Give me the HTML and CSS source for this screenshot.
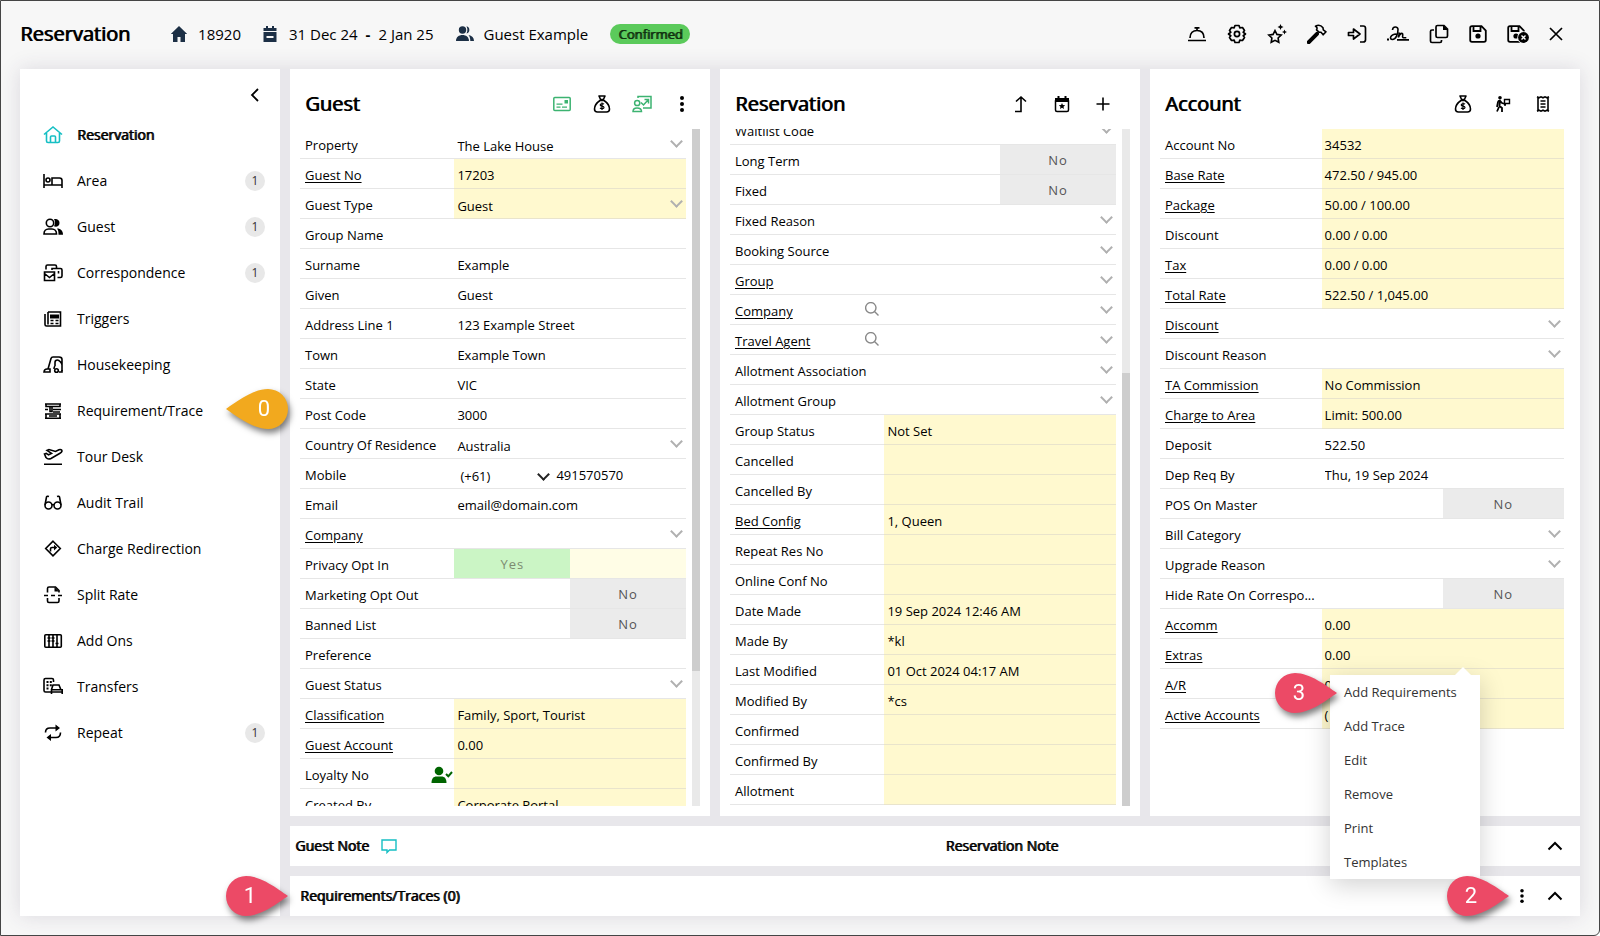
FILE: index.html
```
<!DOCTYPE html>
<html lang="en">
<head>
    <meta charset="UTF-8">
    <meta name="viewport" content="width=device-width, initial-scale=1.0">
    <title>Reservation 18920</title>
    <link rel="stylesheet" href="styles.css">
</head>
<body>

<!-- Shared icons -->
<svg class="sprite" aria-hidden="true">
    <symbol id="money-bag" viewBox="0 0 18 18">
        <path d="M6 1h6l-1.600 3.500h-2.800zM7 5.500C4 7.500 1.500 11 1.500 14c0 2 1 3 3 3h9c2 0 3-1 3-3 0-3-2.500-6.500-5.500-8.500z" fill="none" stroke="currentColor" stroke-width="1.600" stroke-linejoin="round"/>
        <path d="M11 9.200c-.6-.6-3.800-.9-3.800.7 0 1.700 3.800.8 3.800 2.500 0 1.600-3.200 1.400-4 .6M9 7.500v7.400" fill="none" stroke="currentColor" stroke-width="1.200"/>
    </symbol>
    <symbol id="kebab" viewBox="0 0 18 18">
        <circle cx="9" cy="3" r="2"/><circle cx="9" cy="9" r="2"/><circle cx="9" cy="15" r="2"/>
    </symbol>
    <symbol id="chevron-up" viewBox="0 0 18 18">
        <path d="M2.500 12.500L9 6l6.500 6.500" fill="none" stroke="currentColor" stroke-width="2"/>
    </symbol>
    <symbol id="search" viewBox="0 0 14 14">
        <path d="M9.500 9.500L13.500 13.500M11 5.800a5.200 5.200 0 1 1-10.400 0 5.200 5.200 0 0 1 10.400 0z" fill="none" stroke="currentColor" stroke-width="1.400"/>
    </symbol>
    <symbol id="save" viewBox="0 0 18 18">
        <path d="M3 1.200h9.500L16.800 5.500V15c0 1.200-.6 1.800-1.800 1.800H3c-1.200 0-1.800-.6-1.800-1.800V3c0-1.200.6-1.800 1.800-1.800zM4.500 1.500V6h7V1.500" fill="none" stroke="currentColor" stroke-width="1.800"/>
        <circle cx="9" cy="11" r="2.600"/>
    </symbol>
    <symbol id="pin-left" viewBox="0 0 62 40">
        <path d="M0 20C10 13 27 0 42 0a20 20 0 0 1 0 40C27 40 10 27 0 20z"/>
    </symbol>
    <symbol id="pin-right" viewBox="0 0 62 40">
        <path d="M62 20C52 13 35 0 20 0a20 20 0 0 0 0 40c15 0 32-13 42-20z"/>
    </symbol>
</svg>

<div class="app">
    <header class="topbar">
        <h1>Reservation</h1>
        <div class="summary">
            <span class="fact">
                <svg width="18" height="18" viewBox="0 0 18 18"><path d="M9 1L0.800 9H3v8h4.500v-5h3v5H15V9h2.200z"/></svg>
                18920
            </span>
            <span class="fact dates">
                <svg width="14" height="16" viewBox="0 0 14 16"><path d="M3 0h2v2h4V0h2v2h2.500v3H.5V2H3zM.5 6h13v10H.5zM3.500 10v2h7v-2z" fill-rule="evenodd"/></svg>
                31 Dec 24 <b>-</b> 2 Jan 25
            </span>
            <span class="fact">
                <svg width="18" height="18" viewBox="0 0 18 18"><circle cx="6.500" cy="5" r="3.700"/><path d="M0 16c0-4 3-6 6.500-6s6.500 2 6.500 6zM10.500 1.300a3.700 3.700 0 0 1 0 7.200c1.200-2 1.200-5.200 0-7.200zM12.500 10c3.500.5 5.500 2.500 5.500 6h-3.700c0-2.500-.4-4.500-1.800-6z"/></svg>
                Guest Example
            </span>
            <span class="status">Confirmed</span>
        </div>
        <div class="tools">
            <button aria-label="Check in"><svg width="20" height="20" viewBox="0 0 20 20"><path d="M1 16.500h18M3 14C3 9 6 6.500 10 6.500S17 9 17 14M10 6V4M7.500 3.800h5" fill="none" stroke="currentColor" stroke-width="1.700"/></svg></button>
            <button aria-label="Settings"><svg width="20" height="20" viewBox="0 0 20 20"><path d="M8 1.500h4l.8 2.300 2.700-.3 2 3-1.300 1.800L18.500 10l-2.300 1.700 1.300 1.800-2 3-2.700-.3-.8 2.300H8l-.8-2.300-2.700.3-2-3 1.300-1.800L1.500 10l2.300-1.700-1.300-1.800 2-3 2.700.3z" fill="none" stroke="currentColor" stroke-width="1.700" stroke-linejoin="round"/><circle cx="10" cy="10" r="2.600" fill="none" stroke="currentColor" stroke-width="1.700"/></svg></button>
            <button aria-label="Favourites"><svg width="20" height="20" viewBox="0 0 20 20"><path d="M8 6.500l1.900 3.900 4.300.6-3.100 3 .7 4.300L8 16.300l-3.800 2 .7-4.300-3.100-3 4.300-.6z" fill="none" stroke="currentColor" stroke-width="1.600"/><path d="M13.500 0l.9 2.100 2.100.9-2.100.9-.9 2.100-.9-2.100-2.100-.9 2.100-.9zM17.500 5.500l.8 1.700 1.700.8-1.700.8-.8 1.700-.8-1.700-1.700-.8 1.700-.8z"/></svg></button>
            <button aria-label="Maintenance"><svg width="20" height="20" viewBox="0 0 20 20"><path d="M1.800 18.200L10 9.800" stroke="currentColor" stroke-width="4" stroke-linecap="round"/><path d="M8.500 2.200C11 .8 14 1.200 16 3.800l.3 2 2.700 2-2.800 3-2.200-2.500-2-.2-2.500-2.300c1-1.600.6-2.600-1-3.600z" fill="none" stroke="currentColor" stroke-width="1.600" stroke-linejoin="round"/></svg></button>
            <button aria-label="Arrive"><svg width="20" height="20" viewBox="0 0 20 20"><path d="M13 2h3.200c1.500 0 2.300.8 2.300 2.300v11.400c0 1.500-.8 2.300-2.300 2.300H13M1.500 8.500h5V5l6.500 5-6.500 5v-3.500h-5z" fill="none" stroke="currentColor" stroke-width="1.700" stroke-linejoin="round"/></svg></button>
            <button aria-label="Signature"><svg width="22" height="20" viewBox="0 0 22 20"><path d="M5.500 6c.2-4 5.500-4 5.500-.5C11 10 9 15.500 5.500 15.500 2 15.500 3 10.500 9.500 10M12.500 8.500l-1.200 5c1-2.500 2.500-4.500 4-4 1.500.6-.8 4 1 4.200h3" fill="none" stroke="currentColor" stroke-width="1.600"/><path d="M0 14.500h2v2H0zM10 15h12v1.700H10z"/></svg></button>
            <button aria-label="Copy"><svg width="20" height="20" viewBox="0 0 20 20"><path d="M8.500 1.500H15l3.500 3.500v7c0 1-.5 1.500-1.500 1.500H8.500C7.500 13.500 7 13 7 12V3c0-1 .5-1.500 1.500-1.500zM5 6H3c-1 0-1.500.5-1.500 1.500V17c0 1 .5 1.500 1.500 1.500h8c1 0 1.500-.5 1.500-1.500v-1" fill="none" stroke="currentColor" stroke-width="1.700"/><path d="M14 1l5 5h-5z"/></svg></button>
            <button aria-label="Save"><svg width="18" height="18"><use href="#save"/></svg></button>
            <button aria-label="Save and close"><svg width="22" height="20" viewBox="0 0 22 20"><use href="#save" width="18" height="18" y="1"/><circle cx="16.500" cy="13.500" r="6.200" fill="#f7f7f7"/><circle cx="16.500" cy="13.500" r="5.400"/><path d="M14.500 11.500l4 4m0-4l-4 4" stroke="#fff" stroke-width="1.400"/></svg></button>
            <button aria-label="Close"><svg width="14" height="14" viewBox="0 0 14 14"><path d="M1 1l12 12M13 1L1 13" stroke="currentColor" stroke-width="1.700"/></svg></button>
        </div>
    </header>

    <div class="workspace">
        <nav class="sidebar">
            <button class="collapse" aria-label="Collapse menu"><svg width="10" height="16" viewBox="0 0 10 16"><path d="M8 2L2 8l6 6" fill="none" stroke="currentColor" stroke-width="1.800"/></svg></button>
            <a class="nav-item active" href="#">
                <svg width="20" height="20" viewBox="0 0 20 20"><path d="M1 9.500L10 2l9 7.500M3.500 8v8c0 1 .5 1.500 1.500 1.500h10c1 0 1.500-.5 1.500-1.500V8M7.500 17v-5c0-.7.300-1 1-1h3c.7 0 1 .3 1 1v5"/></svg>
                Reservation
            </a>
            <a class="nav-item" href="#">
                <svg width="20" height="20" viewBox="0 0 20 20"><path d="M1 3v14M1 14h18M19 17v-7.500c0-1.500-1-2.500-2.500-2.500H9v7"/><circle cx="5" cy="9" r="2"/></svg>
                Area <span class="count">1</span>
            </a>
            <a class="nav-item" href="#">
                <svg width="20" height="20" viewBox="0 0 20 20"><circle cx="7" cy="6" r="3.700"/><path d="M1 17c0-3 2-5 4.500-5H9c2.500 0 4.500 2 4.500 5z"/><path class="solid" d="M11 2.300c2-.6 5.500.2 5.500 3.700S13 10.300 11 9.200c1.300-2 1.300-5 0-6.900zM14 11.500c4 0 6 2.500 6 6.300h-4.500c0-2.600 0-4.300-1.500-6.300z"/></svg>
                Guest <span class="count">1</span>
            </a>
            <a class="nav-item" href="#">
                <svg width="20" height="20" viewBox="0 0 20 20"><path d="M3 6.500V3.500C3 2.500 3.500 2 4.500 2H12c1 0 1.500.5 1.500 1.500V5M9 7V5.500h8.500c1 0 1.500.5 1.500 1.500v6c0 1-.5 1.500-1.500 1.500h-3M1.500 9h10v8.500h-10zM1.500 10.500l5 4 5-4M15.500 8v2.500"/></svg>
                Correspondence <span class="count">1</span>
            </a>
            <a class="nav-item" href="#">
                <svg width="20" height="20" viewBox="0 0 20 20"><path d="M5 3h12.500v14H3.500c-1 0-1.500-.5-1.500-1.500V5M5 3v12.500M7.500 11.500h3M12.500 11.500h3M7.500 14.500h3M12.500 14.500h3"/><path class="solid" d="M7 5.500h9v4H7z"/></svg>
                Triggers
            </a>
            <a class="nav-item" href="#">
                <svg width="20" height="20" viewBox="0 0 20 20"><path d="M5 14L8 3.500C8.300 2.500 9 2 10 2h6c2 0 3 1 3 2.500V16M1 17c.2-2 1-3 3-3h3v3zM12 11V7.500C12 6 13 5 14.500 5S19 8 19 10M12 11c-1 1-1 2-1 3"/><circle cx="13.500" cy="15.500" r="1.800"/><path d="M16 17h3v-2"/></svg>
                Housekeeping
            </a>
            <a class="nav-item" href="#">
                <svg width="20" height="20" viewBox="0 0 20 20"><path d="M2 3h16M2 17.200h16M3 3v2.500h14V3M2 8.500h3M10 8.500h8M2 13h16M3 13v4M17 13v4M6 15h8M7 6v4.500h2V6M10 11h7"/></svg>
                Requirement/Trace
                <span class="callout callout-0"><svg width="62" height="40"><use href="#pin-left"/></svg><b>0</b></span>
            </a>
            <a class="nav-item" href="#">
                <svg width="20" height="20" viewBox="0 0 20 20"><path d="M1 17.200h18M1.500 7l1.800-.6 2.200 1.400 3-1.400-4.500-3L6 2.500l6.500 2L16 2.700c1.600-.6 3 .2 3 1.300-.2 1-1 1.700-2 2.200L8 11.500c-2 .9-3.800.5-5-1z"/></svg>
                Tour Desk
            </a>
            <a class="nav-item" href="#">
                <svg width="20" height="20" viewBox="0 0 20 20"><circle cx="5.500" cy="12.500" r="3.500"/><circle cx="14.500" cy="12.500" r="3.500"/><path d="M2 12L3.500 4C3.700 3.200 4.500 3 6 3.500M18 12l-1.500-8c-.2-.8-1-1-2.500-.5M9 12c.5-.5 1.500-.5 2 0"/></svg>
                Audit Trail
            </a>
            <a class="nav-item" href="#">
                <svg width="20" height="20" viewBox="0 0 20 20"><path d="M10 2.200l7.300 7.300L10 16.800 2.700 9.500z"/><path d="M7.500 12.500V10c0-1 .5-1.500 1.500-1.500h3"/><path class="solid" d="M11 5.800l3.200 2.800-3.200 2.800z"/></svg>
                Charge Redirection
            </a>
            <a class="nav-item" href="#">
                <svg width="20" height="20" viewBox="0 0 20 20"><path d="M4.500 7.500V3.500c0-1 .5-1.500 1.500-1.500h6.500L16 5.500v2M4.500 13v3c0 1 .5 1.500 1.500 1.500h8.500c1 0 1.500-.5 1.500-1.500v-3M1 10.500h4M8 10.500h4M15 10.500h4"/><path class="solid" d="M11.500 2L16 6.500h-4.500z"/></svg>
                Split Rate
            </a>
            <a class="nav-item" href="#">
                <svg width="20" height="20" viewBox="0 0 20 20"><rect x="1.800" y="3.800" width="16.500" height="12.500" rx="1"/><path d="M6 4v12M10 4v12M14 4v12M4.500 7h3M8.500 7h3M12.500 12.500h3M4.500 10h3M8.500 10h3"/></svg>
                Add Ons
            </a>
            <a class="nav-item" href="#">
                <svg width="20" height="20" viewBox="0 0 20 20"><path d="M8 15H2.500C1.500 15 1 14.500 1 13.500V3c0-1 .5-1.500 1.500-1.500H9c1 0 1.500.5 1.500 1.500v2M8.500 12.500L10 8h6l1.800 4.500M8.500 17v-4.300h10.700V17M8.500 15h10.700"/><path class="solid" d="M3.500 4h2v2h-2zM6.800 4h2v2h-2zM3.500 7.200h2v2h-2zM6.800 7.200h2v2h-2zM3.500 10.400h2v2h-2z"/></svg>
                Transfers
            </a>
            <a class="nav-item" href="#">
                <svg width="20" height="20" viewBox="0 0 20 20"><path d="M2.500 9.500C2.500 6.500 4 5 7 5h7M17.500 9.500c0 3.500-1.500 5-4.500 5H6"/><path class="solid" d="M12.500 1.500L17 5l-4.500 3.500zM8 11l-4.500 3.500L8 18z"/></svg>
                Repeat <span class="count">1</span>
            </a>
        </nav>

        <main class="content">
            <div class="panels">
                <section class="panel guest">
                    <div class="panel-head">
                        <h2>Guest</h2>
                        <button class="green" aria-label="Guest card"><svg width="18" height="18" viewBox="0 0 18 18"><rect x=".8" y="2.500" width="16.400" height="13" rx="1" fill="none" stroke="currentColor" stroke-width="1.500"/><path d="M11.500 5H15v3.500h-3.500zM3.500 8.500h6v1.300h-6zM3.500 11.500h4v1.300h-4zM9 11.500h5v1.300H9z"/></svg></button>
                        <button aria-label="Payments"><svg width="18" height="18"><use href="#money-bag"/></svg></button>
                        <button class="green" aria-label="Guest history"><svg width="20" height="18" viewBox="0 0 20 18"><path d="M6 3V1.500h13V13h-8M1 16.500C1 14 2.500 13 5 13s4.500 1 4.500 3.500zM9 7.500L11.500 10l4.500-5M12.500 4.500h4v4" fill="none" stroke="currentColor" stroke-width="1.500"/><circle cx="5.200" cy="8" r="2.600" fill="none" stroke="currentColor" stroke-width="1.500"/></svg></button>
                        <button aria-label="More guest actions"><svg width="18" height="18"><use href="#kebab"/></svg></button>
                    </div>
                    <div class="scroller">
                        <div class="fields">
                            <div class="row"><label for="g-property">Property</label><div class="pick"><select id="g-property"><option>The Lake House</option></select></div></div>
                            <div class="row"><a href="#">Guest No</a><div class="value ro">17203</div></div>
                            <div class="row"><label for="g-type">Guest Type</label><div class="pick ro"><select id="g-type"><option>Guest</option></select></div></div>
                            <div class="row"><label for="g-group">Group Name</label><input id="g-group" type="text"></div>
                            <div class="row"><label for="g-surname">Surname</label><input id="g-surname" type="text" value="Example"></div>
                            <div class="row"><label for="g-given">Given</label><input id="g-given" type="text" value="Guest"></div>
                            <div class="row"><label for="g-address">Address Line 1</label><input id="g-address" type="text" value="123 Example Street"></div>
                            <div class="row"><label for="g-town">Town</label><input id="g-town" type="text" value="Example Town"></div>
                            <div class="row"><label for="g-state">State</label><input id="g-state" type="text" value="VIC"></div>
                            <div class="row"><label for="g-post">Post Code</label><input id="g-post" type="text" value="3000"></div>
                            <div class="row"><label for="g-country">Country Of Residence</label><div class="pick"><select id="g-country"><option>Australia</option></select></div></div>
                            <div class="row"><label for="g-mobile">Mobile</label><div class="phone"><div class="pick dial"><select aria-label="Country code"><option>(+61)</option></select></div><input id="g-mobile" type="text" value="491570570"></div></div>
                            <div class="row"><label for="g-email">Email</label><input id="g-email" type="text" value="email@domain.com"></div>
                            <div class="row"><a href="#">Company</a><div class="pick"><select aria-label="Company"><option></option></select></div></div>
                            <div class="row"><span>Privacy Opt In</span><button class="toggle on" aria-label="Privacy Opt In"><i>Yes</i><i></i></button></div>
                            <div class="row"><span>Marketing Opt Out</span><button class="toggle" aria-label="Marketing Opt Out"><i></i><i>No</i></button></div>
                            <div class="row"><span>Banned List</span><button class="toggle" aria-label="Banned List"><i></i><i>No</i></button></div>
                            <div class="row"><label for="g-pref">Preference</label><input id="g-pref" type="text"></div>
                            <div class="row"><label for="g-status">Guest Status</label><div class="pick"><select id="g-status"><option></option></select></div></div>
                            <div class="row"><a href="#">Classification</a><div class="value ro">Family, Sport, Tourist</div></div>
                            <div class="row"><a href="#">Guest Account</a><div class="value ro">0.00</div></div>
                            <div class="row"><span>Loyalty No</span><svg class="hint member" width="22" height="18" viewBox="0 0 22 18"><circle cx="8" cy="5" r="4.300"/><path d="M.5 17c0-4.500 2-6.500 5-6.500h5c3 0 5 2 5 6.500z"/><path d="M15 8l2.300 2.300L21 6" fill="none" stroke="currentColor" stroke-width="2"/></svg><div class="value ro"></div></div>
                            <div class="row"><span>Created By</span><div class="value ro">Corporate Portal</div></div>
                        </div>
                        <div class="track"><div class="thumb"></div></div>
                    </div>
                </section>

                <section class="panel booking">
                    <div class="panel-head">
                        <h2>Reservation</h2>
                        <button aria-label="Move up"><svg width="18" height="18" viewBox="0 0 18 18"><path d="M3 16.500h6V2.500M4 6.500l5-4.500 5 4.500" fill="none" stroke="currentColor" stroke-width="1.600"/></svg></button>
                        <button aria-label="Events"><svg width="18" height="18" viewBox="0 0 18 18"><path d="M2.500 6h13v9c0 1-.5 1.500-1.500 1.500H4c-1 0-1.500-.5-1.500-1.500z" fill="none" stroke="currentColor" stroke-width="1.500"/><path d="M4.500 1h2v2h5V1h2v2H16v4H2V3h2.500zM9 8l.9 2.100 2.300.2-1.700 1.500.5 2.200-2-1.200-2 1.200.5-2.200-1.700-1.500 2.300-.2z"/></svg></button>
                        <button aria-label="Add"><svg width="18" height="18" viewBox="0 0 18 18"><path d="M9 2.500v13M2.500 9h13" stroke="currentColor" stroke-width="1.600"/></svg></button>
                    </div>
                    <div class="scroller">
                        <div class="fields scrolled">
                            <div class="row"><label for="r-wait">Waitlist Code</label><div class="pick"><select id="r-wait"><option></option></select></div></div>
                            <div class="row"><span>Long Term</span><button class="toggle" aria-label="Long Term"><i></i><i>No</i></button></div>
                            <div class="row"><span>Fixed</span><button class="toggle" aria-label="Fixed"><i></i><i>No</i></button></div>
                            <div class="row"><label for="r-fixed">Fixed Reason</label><div class="pick"><select id="r-fixed"><option></option></select></div></div>
                            <div class="row"><label for="r-source">Booking Source</label><div class="pick"><select id="r-source"><option></option></select></div></div>
                            <div class="row"><a href="#">Group</a><div class="pick"><select aria-label="Group"><option></option></select></div></div>
                            <div class="row"><a href="#">Company</a><svg class="hint" width="14" height="14"><use href="#search"/></svg><div class="pick"><select aria-label="Company"><option></option></select></div></div>
                            <div class="row"><a href="#">Travel Agent</a><svg class="hint" width="14" height="14"><use href="#search"/></svg><div class="pick"><select aria-label="Travel Agent"><option></option></select></div></div>
                            <div class="row"><label for="r-assoc">Allotment Association</label><div class="pick"><select id="r-assoc"><option></option></select></div></div>
                            <div class="row"><label for="r-agroup">Allotment Group</label><div class="pick"><select id="r-agroup"><option></option></select></div></div>
                            <div class="row"><span>Group Status</span><div class="value ro">Not Set</div></div>
                            <div class="row"><span>Cancelled</span><div class="value ro"></div></div>
                            <div class="row"><span>Cancelled By</span><div class="value ro"></div></div>
                            <div class="row"><a href="#">Bed Config</a><div class="value ro">1, Queen</div></div>
                            <div class="row"><span>Repeat Res No</span><div class="value ro"></div></div>
                            <div class="row"><span>Online Conf No</span><div class="value ro"></div></div>
                            <div class="row"><span>Date Made</span><div class="value ro">19 Sep 2024 12:46 AM</div></div>
                            <div class="row"><span>Made By</span><div class="value ro">*kl</div></div>
                            <div class="row"><span>Last Modified</span><div class="value ro">01 Oct 2024 04:17 AM</div></div>
                            <div class="row"><span>Modified By</span><div class="value ro">*cs</div></div>
                            <div class="row"><span>Confirmed</span><div class="value ro"></div></div>
                            <div class="row"><span>Confirmed By</span><div class="value ro"></div></div>
                            <div class="row"><span>Allotment</span><div class="value ro"></div></div>
                        </div>
                        <div class="track"><div class="thumb"></div></div>
                    </div>
                </section>

                <section class="panel account">
                    <div class="panel-head">
                        <h2>Account</h2>
                        <button aria-label="Payments"><svg width="18" height="18"><use href="#money-bag"/></svg></button>
                        <button aria-label="Porter"><svg width="18" height="18" viewBox="0 0 18 18"><circle cx="6" cy="2.800" r="1.800"/><path d="M3 12l1-5c.3-1 1-1.500 2-1.300L8 8l3 1M6 6l-.5 5 2.500 2v4M5 12l-2 4.500" fill="none" stroke="currentColor" stroke-width="1.800"/><path d="M10.500 4.500h5v4h-5zM10 10h2" fill="none" stroke="currentColor" stroke-width="1.400"/></svg></button>
                        <button aria-label="Invoice"><svg width="18" height="18" viewBox="0 0 18 18"><path d="M4 2v14M14 2v14M3 1.800l2 1 2-1 2 1 2-1 2 1 2-1M3 16.200l2-1 2 1 2-1 2 1 2-1 2 1M6.500 6h5M6.500 9h5M6.500 12h5" fill="none" stroke="currentColor" stroke-width="1.600"/></svg></button>
                    </div>
                    <div class="scroller">
                        <div class="fields">
                            <div class="row"><span>Account No</span><div class="value ro">34532</div></div>
                            <div class="row"><a href="#">Base Rate</a><div class="value ro">472.50 / 945.00</div></div>
                            <div class="row"><a href="#">Package</a><div class="value ro">50.00 / 100.00</div></div>
                            <div class="row"><span>Discount</span><div class="value ro">0.00 / 0.00</div></div>
                            <div class="row"><a href="#">Tax</a><div class="value ro">0.00 / 0.00</div></div>
                            <div class="row"><a href="#">Total Rate</a><div class="value ro">522.50 / 1,045.00</div></div>
                            <div class="row"><a href="#">Discount</a><div class="pick"><select aria-label="Discount"><option></option></select></div></div>
                            <div class="row"><label for="a-reason">Discount Reason</label><div class="pick"><select id="a-reason"><option></option></select></div></div>
                            <div class="row"><a href="#">TA Commission</a><div class="value ro">No Commission</div></div>
                            <div class="row"><a href="#">Charge to Area</a><div class="value ro">Limit: 500.00</div></div>
                            <div class="row"><label for="a-deposit">Deposit</label><input id="a-deposit" type="text" value="522.50"></div>
                            <div class="row"><label for="a-req">Dep Req By</label><input id="a-req" type="text" value="Thu, 19 Sep 2024"></div>
                            <div class="row"><span>POS On Master</span><button class="toggle" aria-label="POS On Master"><i></i><i>No</i></button></div>
                            <div class="row"><label for="a-bill">Bill Category</label><div class="pick"><select id="a-bill"><option></option></select></div></div>
                            <div class="row"><label for="a-upgrade">Upgrade Reason</label><div class="pick"><select id="a-upgrade"><option></option></select></div></div>
                            <div class="row"><span>Hide Rate On Correspo...</span><button class="toggle" aria-label="Hide Rate On Correspondence"><i></i><i>No</i></button></div>
                            <div class="row"><a href="#">Accomm</a><div class="value ro">0.00</div></div>
                            <div class="row"><a href="#">Extras</a><div class="value ro">0.00</div></div>
                            <div class="row"><a href="#">A/R</a><div class="value ro">0</div></div>
                            <div class="row"><a href="#">Active Accounts</a><div class="value ro">(</div></div>
                        </div>
                    </div>
                </section>
            </div>

            <section class="bar notes">
                <h3>Guest Note
                    <svg width="16" height="16" viewBox="0 0 16 16"><path d="M1 2h14v10H8.500L6 14.500V12H1z" fill="none" stroke="#16bfc4" stroke-width="1.400"/></svg>
                </h3>
                <h3>Reservation Note</h3>
                <button aria-label="Expand notes"><svg width="18" height="18"><use href="#chevron-up"/></svg></button>
            </section>

            <section class="bar traces">
                <h3>Requirements/Traces (0)</h3>
                <button aria-label="Requirement actions"><svg width="16" height="16"><use href="#kebab"/></svg></button>
                <button aria-label="Expand requirements"><svg width="18" height="18"><use href="#chevron-up"/></svg></button>

                <div class="menu">
                    <button>Add Requirements</button>
                    <button>Add Trace</button>
                    <button>Edit</button>
                    <button>Remove</button>
                    <button>Print</button>
                    <button>Templates</button>
                    <span class="callout callout-3"><svg width="62" height="40"><use href="#pin-right"/></svg><b>3</b></span>
                </div>
                <span class="callout callout-1"><svg width="62" height="40"><use href="#pin-right"/></svg><b>1</b></span>
                <span class="callout callout-2"><svg width="62" height="40"><use href="#pin-right"/></svg><b>2</b></span>
            </section>
        </main>
    </div>
</div>

</body>
</html>
```
FILE: styles.css
```
* {
    box-sizing: border-box;
}
body {
    margin: 0;
    background-color: #fff;
    color: #000;
    font-family: "Open Sans", sans-serif;
    font-size: 13px;
    line-height: 18px;
}
h1, h2, h3 {
    margin: 0;
}
h1, h2, h3, .status, .active {
    font-weight: 400;
    text-shadow: 1px 0 currentColor;
}
a {
    color: inherit;
}
button, input, select {
    margin: 0;
    padding: 0;
    border: none;
    background: none;
    color: inherit;
    font: inherit;
}
button {
    cursor: pointer;
}
svg {
    display: block;
    flex: none;
    fill: currentColor;
}
.sprite {
    position: absolute;
    width: 0;
    height: 0;
}
.app {
    display: flex;
    flex-direction: column;
    height: 100vh;
    border: 1px solid #454545;
    border-radius: 0 0 6px 0;
    background-color: #f7f7f7;
    overflow: hidden;
}

/* Top bar */
.topbar {
    display: flex;
    align-items: center;
    flex: none;
    height: 68px;
    padding: 0 36px 2px 19px;
}
.topbar h1 {
    font-size: 20px;
    line-height: 28px;
}
.summary {
    display: flex;
    align-items: center;
    margin-left: 40px;
    gap: 22px;
    font-size: 15px;
}
.fact {
    display: flex;
    align-items: center;
    gap: 10px;
}
.fact svg {
    color: #1c2f45;
}
.dates {
    gap: 8px;
}
.dates svg {
    margin-right: 4px;
}
.status {
    padding: 0 8px;
    border-radius: 10px;
    background-color: #5bca5b;
    color: #10300f;
    font-size: 13px;
    line-height: 20px;
}
.tools {
    display: flex;
    align-items: center;
    gap: 20px;
    margin-left: auto;
}

/* Workspace */
.workspace {
    display: flex;
    flex: 1;
    gap: 10px;
    min-height: 0;
    margin: 0 19px 19px;
    background-color: #e8e7eb;
    box-shadow: 0 0 20px rgba(60, 50, 90, 0.15);
}
.sidebar {
    flex: none;
    width: 260px;
    padding-top: 16px;
    background-color: #fff;
}
.collapse {
    display: block;
    margin: 0 20px 7px auto;
}
.collapse svg {
    margin: 2px 0;
}
.nav-item {
    position: relative;
    display: flex;
    align-items: center;
    gap: 14px;
    height: 46px;
    padding: 0 15px 0 23px;
    font-size: 14px;
    text-decoration: none;
}
.nav-item > svg {
    fill: none;
    stroke: currentColor;
    stroke-width: 1.6;
}
.nav-item .solid {
    fill: currentColor;
    stroke: none;
}
.active > svg {
    color: #16bfc4;
}
.count {
    width: 20px;
    margin-left: auto;
    border-radius: 50%;
    background-color: #e8e8e8;
    color: #333;
    font-size: 12px;
    line-height: 20px;
    text-align: center;
}
.content {
    display: flex;
    flex: 1;
    flex-direction: column;
    gap: 10px;
    min-width: 0;
}

/* Panels */
.panels {
    display: grid;
    flex: 1;
    grid-template-columns: 42fr 42fr 43fr;
    grid-template-rows: 100%;
    gap: 10px;
    min-height: 0;
}
.panel {
    display: flex;
    flex-direction: column;
    min-width: 0;
    padding: 0 10px 10px;
    background-color: #fff;
}
.panel-head {
    display: flex;
    align-items: center;
    flex: none;
    gap: 20px;
    height: 60px;
    padding: 9px 17px 0 5px;
}
.guest .panel-head {
    padding-right: 8px;
}
.booking .panel-head {
    gap: 21px;
}
.panel-head h2 {
    margin-right: auto;
    font-size: 20px;
    line-height: 28px;
}
.panel-head button {
    display: flex;
    justify-content: center;
    width: 20px;
}
.green {
    color: #3cb371;
}
.scroller {
    display: flex;
    flex: 1;
    gap: 6px;
    min-height: 0;
    overflow: hidden;
}
.account .scroller {
    padding-right: 6px;
}
.fields {
    flex: 1;
    min-width: 0;
}
.scrolled {
    margin-top: -14px;
}
.row {
    position: relative;
    display: grid;
    grid-template-columns: 40% 60%;
    height: 30px;
    border-bottom: 1px solid #e6e6e6;
}
.row > label, .row > a, .row > span {
    padding: 7px 0 0 5px;
    white-space: nowrap;
}
.row > a {
    text-underline-offset: 2px;
}
.row input, .row select, .value {
    width: 100%;
    min-width: 0;
    height: 29px;
    padding: 4px 0 0 3px;
    outline: none;
}
.row input {
    padding-top: 2px;
}
.value {
    padding-top: 7px;
}
.ro {
    background-color: #fff9cf;
    box-shadow: 0 1px #e9e4cc;
}
.pick {
    position: relative;
    min-width: 0;
}
.pick select {
    appearance: none;
}
.pick::after {
    content: "";
    position: absolute;
    top: 8px;
    right: 5px;
    width: 7px;
    height: 7px;
    border: solid #b0b0b0;
    border-width: 0 2px 2px 0;
    transform: rotate(45deg);
    pointer-events: none;
}
.phone {
    display: grid;
    grid-template-columns: 99px 1fr;
}
.dial select {
    padding-left: 6px;
}
.dial::after {
    top: 11px;
    border-color: #222;
}
.hint {
    position: absolute;
    top: 7px;
    left: 35%;
    color: #888;
}
.member {
    left: 34%;
    color: #006400;
}
.toggle {
    display: grid;
    grid-template-columns: 1fr 1fr;
    height: 29px;
    color: #555;
}
.toggle i {
    height: 29px;
    font-style: normal;
    letter-spacing: 1px;
    line-height: 31px;
}
.toggle i:last-child {
    background-color: #ebebeb;
}
.toggle.on {
    color: #7d8b70;
}
.toggle.on i:first-child {
    background-color: #cbf5c5;
}
.toggle.on i:last-child {
    background-color: #fffde6;
}
.track {
    flex: none;
    width: 8px;
    background-color: #e9e9e9;
}
.thumb {
    height: 80%;
    background-color: #cdcdcd;
}
.booking .track {
    display: flex;
    align-items: flex-end;
}
.booking .thumb {
    width: 8px;
    height: 64%;
}

/* Bottom bars */
.bar {
    position: relative;
    display: flex;
    align-items: center;
    flex: none;
    height: 40px;
    background-color: #fff;
}
.bar h3 {
    display: flex;
    align-items: center;
    gap: 12px;
    font-size: 14px;
}
.notes {
    padding: 0 16px 0 5px;
}
.notes h3:first-child {
    flex: 0 0 calc(50% + 16px);
}
.notes button {
    margin-left: auto;
}
.traces {
    gap: 16px;
    padding: 0 16px 0 10px;
}
.traces h3 {
    margin-right: auto;
}
.menu {
    position: absolute;
    right: 100px;
    bottom: 37px;
    width: 150px;
    background-color: #fff;
    box-shadow: 0 6px 24px rgba(0, 0, 0, 0.18);
    color: #333;
}
.menu::before {
    content: "";
    position: absolute;
    top: -8px;
    right: 9px;
    border: 8px solid transparent;
    border-top: none;
    border-bottom-color: #fff;
}
.menu button {
    display: block;
    width: 100%;
    height: 34px;
    padding: 0 14px;
    text-align: left;
}

/* Numbered markers */
.callout {
    position: absolute;
    width: 62px;
    height: 40px;
    color: #ec4a66;
    filter: drop-shadow(2px 4px 3px rgba(0, 0, 0, 0.5));
}
.callout b {
    position: absolute;
    top: 0;
    left: 4px;
    width: 40px;
    color: #fff;
    font: 22px/40px Roboto, sans-serif;
    text-align: center;
}
.callout-0 {
    top: 1px;
    right: -8px;
    color: #f2a91e;
}
.callout-0 b {
    left: 18px;
}
.callout-1 {
    left: -64px;
    top: 0;
}
.callout-2 {
    right: 71px;
    top: 0;
}
.callout-3 {
    left: -55px;
    top: -2px;
}
```
